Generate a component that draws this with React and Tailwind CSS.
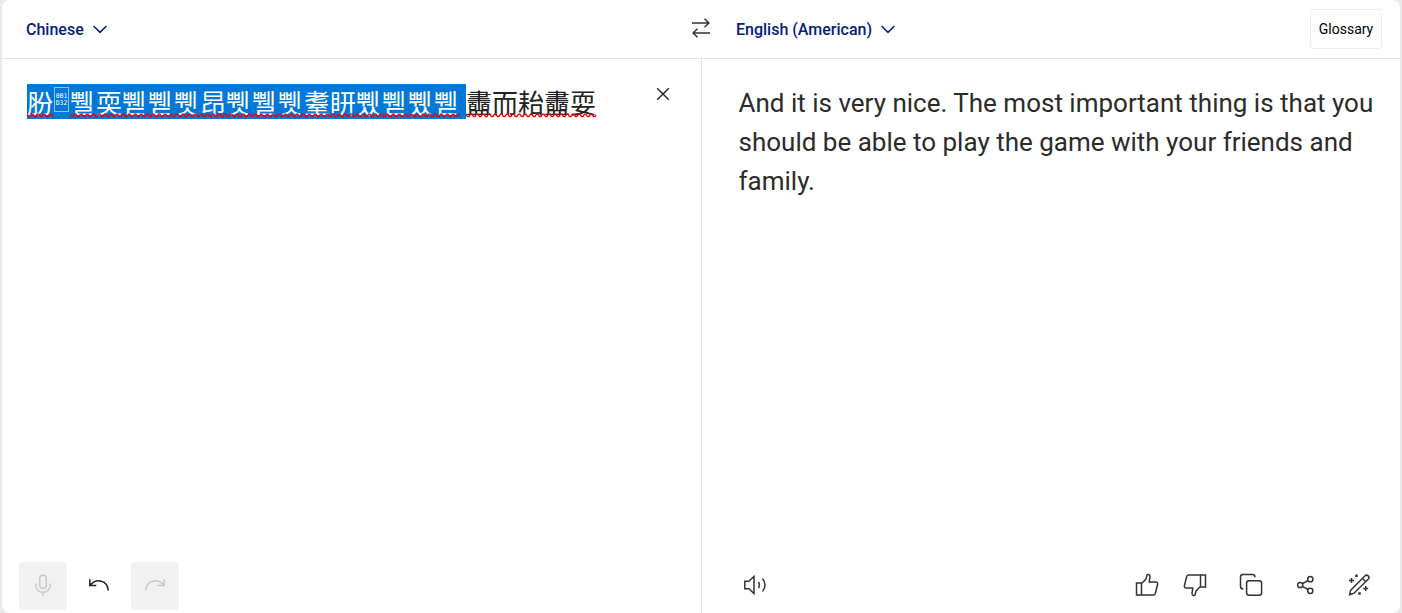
const selectedText = '쀌耎쀋쀋쀗昂쀗쀌쀗耋䀘쀘쀋쀘쀋';

function HexBox() {
  return (
    <span className="mt-[3px] mr-px ml-px flex h-[25px] w-[15px] flex-col items-center justify-center border border-[#8cc4f5] font-['DejaVu_Sans_Mono',monospace] text-[6.5px] leading-[7px]">
      <span>0B1</span>
      <span>D32</span>
    </span>
  );
}

// Spell checker underline, stretches over the run it is placed in
function Squiggle() {
  return (
    <svg className="absolute bottom-[1px] left-0 h-[5px] w-full" aria-hidden="true">
      <defs>
        <pattern id="squiggle" width="6" height="5" patternUnits="userSpaceOnUse">
          <path d="M-1.5 1.2H0l1.5 2.3H3l1.5-2.3H6l1.5 2.3" fill="none" stroke="#f00000" strokeWidth="1.3" />
        </pattern>
      </defs>
      <rect width="100%" height="5" fill="url(#squiggle)" />
    </svg>
  );
}

function Chevron() {
  return (
    <svg width="14" height="9" viewBox="0 0 14 9" fill="none" stroke="currentColor" strokeWidth="1.5">
      <path d="M.6 1 7 7.4 13.4 1" />
    </svg>
  );
}

function Icon({ className = '', children }) {
  return (
    <svg
      width="24"
      height="24"
      viewBox="0 0 24 24"
      fill="none"
      stroke="currentColor"
      strokeWidth="1.5"
      className={`shrink-0 ${className}`}
    >
      {children}
    </svg>
  );
}

function SourcePane() {
  return (
    <section className="flex w-[700px] flex-col border-r border-[#e3e3e3]">
      <div className="flex flex-1 items-start justify-between pt-[25px] pr-[31px] pl-[25px]">
        <p
          lang="zh"
          className="flex h-[35px] font-['Noto_Sans_CJK_SC',sans-serif] text-[26px] leading-[35px] whitespace-nowrap text-[#222]"
        >
          <span className="flex w-[439px] bg-[#0078d7] text-white">
            <span className="relative h-[35px] w-[26px]">
              肦
              <Squiggle />
            </span>
            <HexBox />
            <span className="relative flex h-[35px]">
              {[...selectedText].map((char, idx) => (
                <span key={idx} className="w-[26px]">
                  {char}
                </span>
              ))}
              <Squiggle />
            </span>
          </span>
          <span className="relative h-[35px]">
            䀌而耛䀌耍
            <Squiggle />
          </span>
        </p>
        <button aria-label="Clear" className="mt-[3px] text-[#222]">
          <svg className="block" width="14" height="14" viewBox="0 0 14 14" fill="none" stroke="currentColor" strokeWidth="1.4">
            <path d="m1.2 1.2 11.6 11.6M12.8 1.2 1.2 12.8" />
          </svg>
        </button>
      </div>
      <div className="flex h-[51px] gap-2 pl-[17px]">
        <button aria-label="Dictate" className="flex size-12 items-center justify-center rounded bg-[#f1f1f1] text-[#c8c8c8]">
          <Icon>
            <rect x="8.7" y="1.2" width="6.6" height="13" rx="3.3" />
            <path d="M4.7 9.5V11a7.3 7.3 0 0 0 14.6 0V9.5M12 18.3V22" />
          </Icon>
        </button>
        <button aria-label="Undo" className="flex size-12 items-center justify-center text-[#222]">
          <Icon>
            <path d="M2.8 5.2v6.3h6.5M3 11.3C9.5 3.8 20.6 6 21.2 16.5" />
          </Icon>
        </button>
        <button aria-label="Redo" className="flex size-12 items-center justify-center rounded bg-[#f1f1f1] text-[#c8c8c8]">
          <Icon>
            <path d="M21.2 5.2v6.3h-6.5M21 11.3C14.5 3.8 3.4 6 2.8 16.5" />
          </Icon>
        </button>
      </div>
    </section>
  );
}

function TargetPane() {
  return (
    <section className="flex flex-1 flex-col text-[#333]">
      <p className="flex-1 pt-[25px] pl-[36.5px] text-[26px] leading-[39px] whitespace-nowrap text-[#2b2b2b]">
        And it is very nice. The most important thing is that you
        <br />
        should be able to play the game with your friends and
        <br />
        family.
      </p>
      <div className="flex h-[40px] items-start pr-[29px] pl-[41px]">
        <Icon>
          <path d="M1.8 8.2h4L11 3.5v17l-5.2-4.7h-4zM15.5 9q1.8 3 0 6M19.5 5.5q5 6.5 0 13" />
        </Icon>
        <div className="ml-auto flex">
          <Icon className="mr-6">
            <path d="M1.5 10h5v12h-5zM6.5 10.5 11 6l1-4c.5-1 3.2-.7 3 1.6L14.2 9h6.6c1.4 0 2.1 1 1.8 2.2l-2.3 9.3c-.3 1-1 1.5-2 1.5H6.5" />
          </Icon>
          <Icon className="mr-8">
            <path d="M22.5 14h-5V2h5zM17.5 13.5 13 18l-1 4c-.5 1-3.2.7-3-1.6l.8-5.4H3.2c-1.4 0-2.1-1-1.8-2.2l2.3-9.3c.3-1 1-1.5 2-1.5h11.8" />
          </Icon>
          <Icon className="mr-[31px]">
            <rect x="7.6" y="7.8" width="15" height="14.5" rx="2.5" />
            <path d="M4.3 16C2.5 16 1.5 15 1.5 13.5V4c0-1.5 1-2.5 2.5-2.5h9.5c1.5 0 2.5 1 2.5 2.7" />
          </Icon>
          <Icon className="mr-[29px]">
            <circle cx="6.2" cy="12" r="2.6" />
            <circle cx="16.3" cy="6.2" r="2.6" />
            <circle cx="16.3" cy="17.8" r="2.6" />
            <path d="m8.5 10.7 5.5-3.2m-5.5 5.8 5.5 3.2" />
          </Icon>
          <Icon>
            <path d="M3.5 17.5 17.8 3c2.3-2.3 5.6.8 3.4 3.2L7 20.2l-4.300 1.6zM15.5 5.500l3.3 3.3" />
            <path d="M4.5 5v5M2 7.5h5M18.7 13v5M16.2 15.5h5" />
            <path d="M9.5 1.5V4M12.5 19.3v2.5" strokeWidth="2.5" />
          </Icon>
        </div>
      </div>
    </section>
  );
}

export default function App() {
  return (
    <div className="h-[613px] w-[1402px] bg-[#e9e9e9] px-[2px] font-[Roboto,sans-serif]">
      <main className="flex h-full flex-col overflow-hidden rounded-lg bg-white">
        <header className="flex h-[59px] shrink-0 items-center border-b border-[#e3e3e3] pr-[18px] pl-[24px] text-base font-medium text-[#04207a]">
          <button className="flex items-center gap-[9px] pt-px">
            Chinese
            <Chevron />
          </button>
          <button aria-label="Swap languages" className="mr-[26px] mb-[2px] ml-auto text-[#333]">
            <svg width="18" height="20" viewBox="0 0 18 20" fill="none" stroke="currentColor" strokeWidth="1.5">
              <path d="M0 5h17M12.5.7 17 5l-4.5 4.3M18 15H1M5.5 10.7 1 15l4.5 4.3" />
            </svg>
          </button>
          <div className="flex w-[646px] items-center justify-between">
            <button className="flex items-center gap-[9px] pt-px">
              English (American)
              <Chevron />
            </button>
            <button className="h-10 w-[72px] rounded-[3px] border border-[#ececec] text-sm font-normal text-black">
              Glossary
            </button>
          </div>
        </header>
        <div className="flex flex-1">
          <SourcePane />
          <TargetPane />
        </div>
      </main>
    </div>
  );
}
